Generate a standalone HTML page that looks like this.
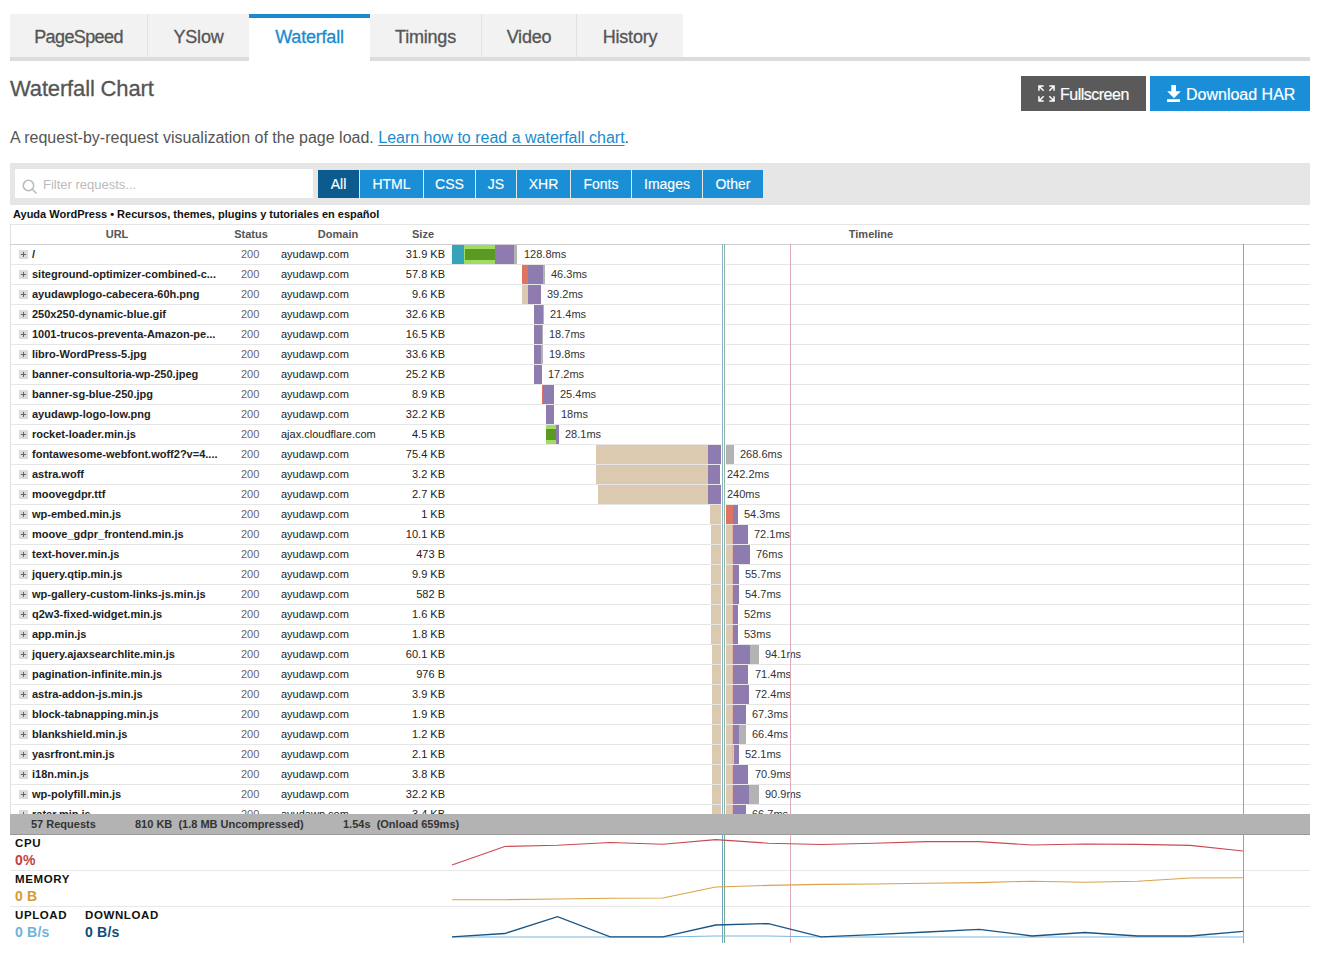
<!DOCTYPE html>
<html><head><meta charset="utf-8">
<style>
*{box-sizing:border-box}
html,body{margin:0;padding:0;background:#fff;width:1325px;height:960px;overflow:hidden}
body{font-family:"Liberation Sans",sans-serif;position:relative}
.a{position:absolute}
.tab{position:absolute;top:14px;height:43px;background:#f2f2f2;color:#555;font-size:18px;text-align:center;line-height:44px;padding-top:1px;letter-spacing:-0.2px;-webkit-text-stroke:0.3px currentColor}
.sep{position:absolute;top:14px;height:43px;width:1px;background:#e2e2e2}
.btn{position:absolute;top:76px;height:35px;color:#fff;font-size:16px;line-height:35px;-webkit-text-stroke:0.2px #fff}
.tb{position:absolute;top:170px;height:28px;background:#1a8fd6;color:#fff;font-size:14px;line-height:28px;text-align:center;-webkit-text-stroke:0.15px #fff}
.row{position:absolute;left:10px;width:1300px;height:20px;border-bottom:1px solid #e6e6e6}
.t{position:absolute;font-size:11px;line-height:20px;white-space:nowrap}
.bar{position:absolute;height:19px}
.lab{position:absolute;font-size:11px;line-height:20px;color:#333;white-space:nowrap}
</style></head><body>

<div class="a" style="left:10px;top:57px;width:1300px;height:4px;background:#dcdcdc"></div>
<div class="tab" style="left:10px;width:137px;letter-spacing:-0.6px;">PageSpeed</div>
<div class="tab" style="left:148px;width:101px;">YSlow</div>
<div class="tab" style="left:370px;width:111px;">Timings</div>
<div class="tab" style="left:482px;width:94px;">Video</div>
<div class="tab" style="left:577px;width:106px;">History</div>
<div class="sep" style="left:147px"></div>
<div class="sep" style="left:481px"></div>
<div class="sep" style="left:576px"></div>
<div class="tab" style="left:249px;width:121px;top:14px;height:47px;background:#fff;color:#1a8bd0;line-height:44px">Waterfall</div>
<div class="a" style="left:249px;top:14px;width:121px;height:4px;background:#1a8bd0"></div>
<div class="a" style="left:10px;top:75px;font-size:22px;line-height:28px;color:#555;letter-spacing:-0.15px;-webkit-text-stroke:0.3px #555">Waterfall Chart</div>
<div class="btn" style="left:1021px;width:125px;background:#5a5a5a">
<svg class="a" style="left:17px;top:9px" width="17" height="17" viewBox="0 0 18 18" fill="none" stroke="#fff" stroke-width="1.6">
<path d="M1 6V1h5M1 1l5 5M12 1h5v5M17 1l-5 5M1 12v5h5M1 17l5-5M17 12v5h-5M17 17l-5-5"/></svg>
<span class="a" style="left:39px;top:1px;letter-spacing:-0.5px">Fullscreen</span></div>
<div class="btn" style="left:1150px;width:160px;background:#1a8fd8">
<svg class="a" style="left:17px;top:9px" width="14" height="17" viewBox="0 0 14 17" fill="#fff">
<path d="M4.3 0H9V6.3H13.8L7 13.3L0.2 6.3H4.3Z"/><rect x="0" y="14.2" width="13" height="2.8"/></svg>
<span class="a" style="left:36px;top:1px">Download HAR</span></div>
<div class="a" style="left:10px;top:128px;font-size:16px;line-height:20px;color:#555;white-space:nowrap">A request-by-request visualization of the page load. <span style="color:#1a8bd0;text-decoration:underline;text-underline-offset:2px">Learn how to read a waterfall chart</span>.</div>
<div class="a" style="left:10px;top:163px;width:1300px;height:42px;background:#e6e6e6"></div>
<div class="a" style="left:15px;top:169px;width:298px;height:29px;background:#fff"></div>
<svg class="a" style="left:22px;top:178.5px" width="16" height="16" viewBox="0 0 16 16" fill="none" stroke="#bbb" stroke-width="1.6"><circle cx="6.5" cy="6.5" r="5.2"/><path d="M10.3 10.3L14.5 14.5"/></svg>
<div class="a" style="left:43px;top:170px;font-size:13px;line-height:29px;color:#bbb">Filter requests...</div>
<div class="tb" style="left:318px;width:41px;background:#0b5b8f">All</div>
<div class="tb" style="left:360px;width:63px;background:#1a8fd6">HTML</div>
<div class="tb" style="left:424px;width:51px;background:#1a8fd6">CSS</div>
<div class="tb" style="left:476px;width:40px;background:#1a8fd6">JS</div>
<div class="tb" style="left:517px;width:53px;background:#1a8fd6">XHR</div>
<div class="tb" style="left:571px;width:60px;background:#1a8fd6">Fonts</div>
<div class="tb" style="left:632px;width:70px;background:#1a8fd6">Images</div>
<div class="tb" style="left:703px;width:60px;background:#1a8fd6">Other</div>
<div class="a" style="left:13px;top:207px;font-size:11px;line-height:14px;font-weight:bold;color:#111;white-space:nowrap">Ayuda WordPress &#8226; Recursos, themes, plugins y tutoriales en espa&ntilde;ol</div>
<div class="a" style="left:10px;top:224px;width:1300px;height:1px;background:#e6e6e6"></div>
<div class="a" style="left:10px;top:224px;width:1px;height:590px;background:#e0e0e0"></div>
<div class="a" style="left:10px;top:244px;width:1300px;height:1px;background:#cfcfcf"></div>
<div class="a" style="left:722px;top:244px;width:1px;height:1px;background:#8fb0cc"></div>
<div class="a" style="left:724px;top:244px;width:1px;height:1px;background:#8cb8a0"></div>
<div class="a" style="left:790px;top:244px;width:1px;height:1px;background:#dcaab8"></div>
<div class="a" style="left:1243px;top:244px;width:1px;height:1px;background:#a89aaa"></div>
<div class="t" style="left:57px;width:120px;top:224px;text-align:center;font-weight:bold;color:#555">URL</div>
<div class="t" style="left:191px;width:120px;top:224px;text-align:center;font-weight:bold;color:#555">Status</div>
<div class="t" style="left:278px;width:120px;top:224px;text-align:center;font-weight:bold;color:#555">Domain</div>
<div class="t" style="left:363px;width:120px;top:224px;text-align:center;font-weight:bold;color:#555">Size</div>
<div class="t" style="left:811px;width:120px;top:224px;text-align:center;font-weight:bold;color:#555">Timeline</div>
<div class="a" style="left:0;top:245px;width:1325px;height:569px;overflow:hidden">
<div class="a" style="left:10px;top:19px;width:1300px;height:1px;background:#e6e6e6"></div>
<div class="a" style="left:19px;top:5px;width:9px;height:9px;background:#dcdcdc"></div>
<div class="a" style="left:21px;top:9px;width:5px;height:1px;background:#666"></div>
<div class="a" style="left:23px;top:7px;width:1px;height:5px;background:#666"></div>
<div class="t" style="left:32px;top:-1px;font-weight:bold;color:#222">/</div>
<div class="t" style="left:241px;top:-1px;color:#666">200</div>
<div class="t" style="left:281px;top:-1px;color:#222">ayudawp.com</div>
<div class="t" style="left:345px;width:100px;text-align:right;top:-1px;color:#222">31.9 KB</div>
<div class="bar" style="left:452px;width:12px;top:0px;background:#35a3b8"></div>
<div class="bar" style="left:464px;width:31px;top:0px;background:#a0dc60"></div>
<div class="bar" style="left:495px;width:19px;top:0px;background:#8e7bb0"></div>
<div class="bar" style="left:514px;width:3px;top:0px;background:#b3b3b3"></div>
<div class="bar" style="left:465px;width:30px;top:4px;height:11px;background:#5a9a22"></div>
<div class="lab" style="left:524px;top:-1px">128.8ms</div>
<div class="a" style="left:10px;top:39px;width:1300px;height:1px;background:#e6e6e6"></div>
<div class="a" style="left:19px;top:25px;width:9px;height:9px;background:#dcdcdc"></div>
<div class="a" style="left:21px;top:29px;width:5px;height:1px;background:#666"></div>
<div class="a" style="left:23px;top:27px;width:1px;height:5px;background:#666"></div>
<div class="t" style="left:32px;top:19px;font-weight:bold;color:#222">siteground-optimizer-combined-c...</div>
<div class="t" style="left:241px;top:19px;color:#666">200</div>
<div class="t" style="left:281px;top:19px;color:#222">ayudawp.com</div>
<div class="t" style="left:345px;width:100px;text-align:right;top:19px;color:#222">57.8 KB</div>
<div class="bar" style="left:522px;width:6px;top:20px;background:#e0735f"></div>
<div class="bar" style="left:528px;width:15px;top:20px;background:#8e7bb0"></div>
<div class="bar" style="left:543px;width:2px;top:20px;background:#b3b3b3"></div>
<div class="lab" style="left:551px;top:19px">46.3ms</div>
<div class="a" style="left:10px;top:59px;width:1300px;height:1px;background:#e6e6e6"></div>
<div class="a" style="left:19px;top:45px;width:9px;height:9px;background:#dcdcdc"></div>
<div class="a" style="left:21px;top:49px;width:5px;height:1px;background:#666"></div>
<div class="a" style="left:23px;top:47px;width:1px;height:5px;background:#666"></div>
<div class="t" style="left:32px;top:39px;font-weight:bold;color:#222">ayudawplogo-cabecera-60h.png</div>
<div class="t" style="left:241px;top:39px;color:#666">200</div>
<div class="t" style="left:281px;top:39px;color:#222">ayudawp.com</div>
<div class="t" style="left:345px;width:100px;text-align:right;top:39px;color:#222">9.6 KB</div>
<div class="bar" style="left:522px;width:6px;top:40px;background:#dccab0"></div>
<div class="bar" style="left:528px;width:13px;top:40px;background:#8e7bb0"></div>
<div class="lab" style="left:547px;top:39px">39.2ms</div>
<div class="a" style="left:10px;top:79px;width:1300px;height:1px;background:#e6e6e6"></div>
<div class="a" style="left:19px;top:65px;width:9px;height:9px;background:#dcdcdc"></div>
<div class="a" style="left:21px;top:69px;width:5px;height:1px;background:#666"></div>
<div class="a" style="left:23px;top:67px;width:1px;height:5px;background:#666"></div>
<div class="t" style="left:32px;top:59px;font-weight:bold;color:#222">250x250-dynamic-blue.gif</div>
<div class="t" style="left:241px;top:59px;color:#666">200</div>
<div class="t" style="left:281px;top:59px;color:#222">ayudawp.com</div>
<div class="t" style="left:345px;width:100px;text-align:right;top:59px;color:#222">32.6 KB</div>
<div class="bar" style="left:534px;width:9px;top:60px;background:#8e7bb0"></div>
<div class="bar" style="left:543px;width:1px;top:60px;background:#b3b3b3"></div>
<div class="lab" style="left:550px;top:59px">21.4ms</div>
<div class="a" style="left:10px;top:99px;width:1300px;height:1px;background:#e6e6e6"></div>
<div class="a" style="left:19px;top:85px;width:9px;height:9px;background:#dcdcdc"></div>
<div class="a" style="left:21px;top:89px;width:5px;height:1px;background:#666"></div>
<div class="a" style="left:23px;top:87px;width:1px;height:5px;background:#666"></div>
<div class="t" style="left:32px;top:79px;font-weight:bold;color:#222">1001-trucos-preventa-Amazon-pe...</div>
<div class="t" style="left:241px;top:79px;color:#666">200</div>
<div class="t" style="left:281px;top:79px;color:#222">ayudawp.com</div>
<div class="t" style="left:345px;width:100px;text-align:right;top:79px;color:#222">16.5 KB</div>
<div class="bar" style="left:534px;width:8px;top:80px;background:#8e7bb0"></div>
<div class="bar" style="left:542px;width:1px;top:80px;background:#b3b3b3"></div>
<div class="lab" style="left:549px;top:79px">18.7ms</div>
<div class="a" style="left:10px;top:119px;width:1300px;height:1px;background:#e6e6e6"></div>
<div class="a" style="left:19px;top:105px;width:9px;height:9px;background:#dcdcdc"></div>
<div class="a" style="left:21px;top:109px;width:5px;height:1px;background:#666"></div>
<div class="a" style="left:23px;top:107px;width:1px;height:5px;background:#666"></div>
<div class="t" style="left:32px;top:99px;font-weight:bold;color:#222">libro-WordPress-5.jpg</div>
<div class="t" style="left:241px;top:99px;color:#666">200</div>
<div class="t" style="left:281px;top:99px;color:#222">ayudawp.com</div>
<div class="t" style="left:345px;width:100px;text-align:right;top:99px;color:#222">33.6 KB</div>
<div class="bar" style="left:534px;width:7px;top:100px;background:#8e7bb0"></div>
<div class="bar" style="left:541px;width:2px;top:100px;background:#b3b3b3"></div>
<div class="lab" style="left:549px;top:99px">19.8ms</div>
<div class="a" style="left:10px;top:139px;width:1300px;height:1px;background:#e6e6e6"></div>
<div class="a" style="left:19px;top:125px;width:9px;height:9px;background:#dcdcdc"></div>
<div class="a" style="left:21px;top:129px;width:5px;height:1px;background:#666"></div>
<div class="a" style="left:23px;top:127px;width:1px;height:5px;background:#666"></div>
<div class="t" style="left:32px;top:119px;font-weight:bold;color:#222">banner-consultoria-wp-250.jpeg</div>
<div class="t" style="left:241px;top:119px;color:#666">200</div>
<div class="t" style="left:281px;top:119px;color:#222">ayudawp.com</div>
<div class="t" style="left:345px;width:100px;text-align:right;top:119px;color:#222">25.2 KB</div>
<div class="bar" style="left:534px;width:8px;top:120px;background:#8e7bb0"></div>
<div class="lab" style="left:548px;top:119px">17.2ms</div>
<div class="a" style="left:10px;top:159px;width:1300px;height:1px;background:#e6e6e6"></div>
<div class="a" style="left:19px;top:145px;width:9px;height:9px;background:#dcdcdc"></div>
<div class="a" style="left:21px;top:149px;width:5px;height:1px;background:#666"></div>
<div class="a" style="left:23px;top:147px;width:1px;height:5px;background:#666"></div>
<div class="t" style="left:32px;top:139px;font-weight:bold;color:#222">banner-sg-blue-250.jpg</div>
<div class="t" style="left:241px;top:139px;color:#666">200</div>
<div class="t" style="left:281px;top:139px;color:#222">ayudawp.com</div>
<div class="t" style="left:345px;width:100px;text-align:right;top:139px;color:#222">8.9 KB</div>
<div class="bar" style="left:542px;width:1px;top:140px;background:#e0735f"></div>
<div class="bar" style="left:543px;width:11px;top:140px;background:#8e7bb0"></div>
<div class="lab" style="left:560px;top:139px">25.4ms</div>
<div class="a" style="left:10px;top:179px;width:1300px;height:1px;background:#e6e6e6"></div>
<div class="a" style="left:19px;top:165px;width:9px;height:9px;background:#dcdcdc"></div>
<div class="a" style="left:21px;top:169px;width:5px;height:1px;background:#666"></div>
<div class="a" style="left:23px;top:167px;width:1px;height:5px;background:#666"></div>
<div class="t" style="left:32px;top:159px;font-weight:bold;color:#222">ayudawp-logo-low.png</div>
<div class="t" style="left:241px;top:159px;color:#666">200</div>
<div class="t" style="left:281px;top:159px;color:#222">ayudawp.com</div>
<div class="t" style="left:345px;width:100px;text-align:right;top:159px;color:#222">32.2 KB</div>
<div class="bar" style="left:546px;width:8px;top:160px;background:#8e7bb0"></div>
<div class="lab" style="left:561px;top:159px">18ms</div>
<div class="a" style="left:10px;top:199px;width:1300px;height:1px;background:#e6e6e6"></div>
<div class="a" style="left:19px;top:185px;width:9px;height:9px;background:#dcdcdc"></div>
<div class="a" style="left:21px;top:189px;width:5px;height:1px;background:#666"></div>
<div class="a" style="left:23px;top:187px;width:1px;height:5px;background:#666"></div>
<div class="t" style="left:32px;top:179px;font-weight:bold;color:#222">rocket-loader.min.js</div>
<div class="t" style="left:241px;top:179px;color:#666">200</div>
<div class="t" style="left:281px;top:179px;color:#222">ajax.cloudflare.com</div>
<div class="t" style="left:345px;width:100px;text-align:right;top:179px;color:#222">4.5 KB</div>
<div class="bar" style="left:546px;width:10px;top:180px;background:#a0dc60"></div>
<div class="bar" style="left:556px;width:3px;top:180px;background:#8e7bb0"></div>
<div class="bar" style="left:546px;width:10px;top:184px;height:11px;background:#5a9a22"></div>
<div class="lab" style="left:565px;top:179px">28.1ms</div>
<div class="a" style="left:10px;top:219px;width:1300px;height:1px;background:#e6e6e6"></div>
<div class="a" style="left:19px;top:205px;width:9px;height:9px;background:#dcdcdc"></div>
<div class="a" style="left:21px;top:209px;width:5px;height:1px;background:#666"></div>
<div class="a" style="left:23px;top:207px;width:1px;height:5px;background:#666"></div>
<div class="t" style="left:32px;top:199px;font-weight:bold;color:#222">fontawesome-webfont.woff2?v=4....</div>
<div class="t" style="left:241px;top:199px;color:#666">200</div>
<div class="t" style="left:281px;top:199px;color:#222">ayudawp.com</div>
<div class="t" style="left:345px;width:100px;text-align:right;top:199px;color:#222">75.4 KB</div>
<div class="bar" style="left:596px;width:112px;top:200px;background:#dccab0"></div>
<div class="bar" style="left:708px;width:13px;top:200px;background:#8e7bb0"></div>
<div class="bar" style="left:726px;width:8px;top:200px;background:#b3b3b3"></div>
<div class="lab" style="left:740px;top:199px">268.6ms</div>
<div class="a" style="left:10px;top:239px;width:1300px;height:1px;background:#e6e6e6"></div>
<div class="a" style="left:19px;top:225px;width:9px;height:9px;background:#dcdcdc"></div>
<div class="a" style="left:21px;top:229px;width:5px;height:1px;background:#666"></div>
<div class="a" style="left:23px;top:227px;width:1px;height:5px;background:#666"></div>
<div class="t" style="left:32px;top:219px;font-weight:bold;color:#222">astra.woff</div>
<div class="t" style="left:241px;top:219px;color:#666">200</div>
<div class="t" style="left:281px;top:219px;color:#222">ayudawp.com</div>
<div class="t" style="left:345px;width:100px;text-align:right;top:219px;color:#222">3.2 KB</div>
<div class="bar" style="left:596px;width:112px;top:220px;background:#dccab0"></div>
<div class="bar" style="left:708px;width:12px;top:220px;background:#8e7bb0"></div>
<div class="lab" style="left:727px;top:219px">242.2ms</div>
<div class="a" style="left:10px;top:259px;width:1300px;height:1px;background:#e6e6e6"></div>
<div class="a" style="left:19px;top:245px;width:9px;height:9px;background:#dcdcdc"></div>
<div class="a" style="left:21px;top:249px;width:5px;height:1px;background:#666"></div>
<div class="a" style="left:23px;top:247px;width:1px;height:5px;background:#666"></div>
<div class="t" style="left:32px;top:239px;font-weight:bold;color:#222">moovegdpr.ttf</div>
<div class="t" style="left:241px;top:239px;color:#666">200</div>
<div class="t" style="left:281px;top:239px;color:#222">ayudawp.com</div>
<div class="t" style="left:345px;width:100px;text-align:right;top:239px;color:#222">2.7 KB</div>
<div class="bar" style="left:598px;width:110px;top:240px;background:#dccab0"></div>
<div class="bar" style="left:708px;width:13px;top:240px;background:#8e7bb0"></div>
<div class="lab" style="left:727px;top:239px">240ms</div>
<div class="a" style="left:10px;top:279px;width:1300px;height:1px;background:#e6e6e6"></div>
<div class="a" style="left:19px;top:265px;width:9px;height:9px;background:#dcdcdc"></div>
<div class="a" style="left:21px;top:269px;width:5px;height:1px;background:#666"></div>
<div class="a" style="left:23px;top:267px;width:1px;height:5px;background:#666"></div>
<div class="t" style="left:32px;top:259px;font-weight:bold;color:#222">wp-embed.min.js</div>
<div class="t" style="left:241px;top:259px;color:#666">200</div>
<div class="t" style="left:281px;top:259px;color:#222">ayudawp.com</div>
<div class="t" style="left:345px;width:100px;text-align:right;top:259px;color:#222">1 KB</div>
<div class="bar" style="left:710px;width:16px;top:260px;background:#dccab0"></div>
<div class="bar" style="left:726px;width:7px;top:260px;background:#e0735f"></div>
<div class="bar" style="left:733px;width:5px;top:260px;background:#8e7bb0"></div>
<div class="lab" style="left:744px;top:259px">54.3ms</div>
<div class="a" style="left:10px;top:299px;width:1300px;height:1px;background:#e6e6e6"></div>
<div class="a" style="left:19px;top:285px;width:9px;height:9px;background:#dcdcdc"></div>
<div class="a" style="left:21px;top:289px;width:5px;height:1px;background:#666"></div>
<div class="a" style="left:23px;top:287px;width:1px;height:5px;background:#666"></div>
<div class="t" style="left:32px;top:279px;font-weight:bold;color:#222">moove_gdpr_frontend.min.js</div>
<div class="t" style="left:241px;top:279px;color:#666">200</div>
<div class="t" style="left:281px;top:279px;color:#222">ayudawp.com</div>
<div class="t" style="left:345px;width:100px;text-align:right;top:279px;color:#222">10.1 KB</div>
<div class="bar" style="left:711px;width:22px;top:280px;background:#dccab0"></div>
<div class="bar" style="left:733px;width:15px;top:280px;background:#8e7bb0"></div>
<div class="bar" style="left:732px;width:1px;top:280px;background:#eab0a0"></div>
<div class="lab" style="left:754px;top:279px">72.1ms</div>
<div class="a" style="left:10px;top:319px;width:1300px;height:1px;background:#e6e6e6"></div>
<div class="a" style="left:19px;top:305px;width:9px;height:9px;background:#dcdcdc"></div>
<div class="a" style="left:21px;top:309px;width:5px;height:1px;background:#666"></div>
<div class="a" style="left:23px;top:307px;width:1px;height:5px;background:#666"></div>
<div class="t" style="left:32px;top:299px;font-weight:bold;color:#222">text-hover.min.js</div>
<div class="t" style="left:241px;top:299px;color:#666">200</div>
<div class="t" style="left:281px;top:299px;color:#222">ayudawp.com</div>
<div class="t" style="left:345px;width:100px;text-align:right;top:299px;color:#222">473 B</div>
<div class="bar" style="left:711px;width:22px;top:300px;background:#dccab0"></div>
<div class="bar" style="left:733px;width:17px;top:300px;background:#8e7bb0"></div>
<div class="bar" style="left:732px;width:1px;top:300px;background:#eab0a0"></div>
<div class="lab" style="left:756px;top:299px">76ms</div>
<div class="a" style="left:10px;top:339px;width:1300px;height:1px;background:#e6e6e6"></div>
<div class="a" style="left:19px;top:325px;width:9px;height:9px;background:#dcdcdc"></div>
<div class="a" style="left:21px;top:329px;width:5px;height:1px;background:#666"></div>
<div class="a" style="left:23px;top:327px;width:1px;height:5px;background:#666"></div>
<div class="t" style="left:32px;top:319px;font-weight:bold;color:#222">jquery.qtip.min.js</div>
<div class="t" style="left:241px;top:319px;color:#666">200</div>
<div class="t" style="left:281px;top:319px;color:#222">ayudawp.com</div>
<div class="t" style="left:345px;width:100px;text-align:right;top:319px;color:#222">9.9 KB</div>
<div class="bar" style="left:711px;width:22px;top:320px;background:#dccab0"></div>
<div class="bar" style="left:733px;width:6px;top:320px;background:#8e7bb0"></div>
<div class="bar" style="left:732px;width:1px;top:320px;background:#eab0a0"></div>
<div class="lab" style="left:745px;top:319px">55.7ms</div>
<div class="a" style="left:10px;top:359px;width:1300px;height:1px;background:#e6e6e6"></div>
<div class="a" style="left:19px;top:345px;width:9px;height:9px;background:#dcdcdc"></div>
<div class="a" style="left:21px;top:349px;width:5px;height:1px;background:#666"></div>
<div class="a" style="left:23px;top:347px;width:1px;height:5px;background:#666"></div>
<div class="t" style="left:32px;top:339px;font-weight:bold;color:#222">wp-gallery-custom-links-js.min.js</div>
<div class="t" style="left:241px;top:339px;color:#666">200</div>
<div class="t" style="left:281px;top:339px;color:#222">ayudawp.com</div>
<div class="t" style="left:345px;width:100px;text-align:right;top:339px;color:#222">582 B</div>
<div class="bar" style="left:711px;width:22px;top:340px;background:#dccab0"></div>
<div class="bar" style="left:733px;width:6px;top:340px;background:#8e7bb0"></div>
<div class="bar" style="left:732px;width:1px;top:340px;background:#eab0a0"></div>
<div class="lab" style="left:745px;top:339px">54.7ms</div>
<div class="a" style="left:10px;top:379px;width:1300px;height:1px;background:#e6e6e6"></div>
<div class="a" style="left:19px;top:365px;width:9px;height:9px;background:#dcdcdc"></div>
<div class="a" style="left:21px;top:369px;width:5px;height:1px;background:#666"></div>
<div class="a" style="left:23px;top:367px;width:1px;height:5px;background:#666"></div>
<div class="t" style="left:32px;top:359px;font-weight:bold;color:#222">q2w3-fixed-widget.min.js</div>
<div class="t" style="left:241px;top:359px;color:#666">200</div>
<div class="t" style="left:281px;top:359px;color:#222">ayudawp.com</div>
<div class="t" style="left:345px;width:100px;text-align:right;top:359px;color:#222">1.6 KB</div>
<div class="bar" style="left:711px;width:22px;top:360px;background:#dccab0"></div>
<div class="bar" style="left:733px;width:5px;top:360px;background:#8e7bb0"></div>
<div class="bar" style="left:732px;width:1px;top:360px;background:#eab0a0"></div>
<div class="lab" style="left:744px;top:359px">52ms</div>
<div class="a" style="left:10px;top:399px;width:1300px;height:1px;background:#e6e6e6"></div>
<div class="a" style="left:19px;top:385px;width:9px;height:9px;background:#dcdcdc"></div>
<div class="a" style="left:21px;top:389px;width:5px;height:1px;background:#666"></div>
<div class="a" style="left:23px;top:387px;width:1px;height:5px;background:#666"></div>
<div class="t" style="left:32px;top:379px;font-weight:bold;color:#222">app.min.js</div>
<div class="t" style="left:241px;top:379px;color:#666">200</div>
<div class="t" style="left:281px;top:379px;color:#222">ayudawp.com</div>
<div class="t" style="left:345px;width:100px;text-align:right;top:379px;color:#222">1.8 KB</div>
<div class="bar" style="left:711px;width:22px;top:380px;background:#dccab0"></div>
<div class="bar" style="left:733px;width:5px;top:380px;background:#8e7bb0"></div>
<div class="bar" style="left:732px;width:1px;top:380px;background:#eab0a0"></div>
<div class="lab" style="left:744px;top:379px">53ms</div>
<div class="a" style="left:10px;top:419px;width:1300px;height:1px;background:#e6e6e6"></div>
<div class="a" style="left:19px;top:405px;width:9px;height:9px;background:#dcdcdc"></div>
<div class="a" style="left:21px;top:409px;width:5px;height:1px;background:#666"></div>
<div class="a" style="left:23px;top:407px;width:1px;height:5px;background:#666"></div>
<div class="t" style="left:32px;top:399px;font-weight:bold;color:#222">jquery.ajaxsearchlite.min.js</div>
<div class="t" style="left:241px;top:399px;color:#666">200</div>
<div class="t" style="left:281px;top:399px;color:#222">ayudawp.com</div>
<div class="t" style="left:345px;width:100px;text-align:right;top:399px;color:#222">60.1 KB</div>
<div class="bar" style="left:712px;width:21px;top:400px;background:#dccab0"></div>
<div class="bar" style="left:733px;width:17px;top:400px;background:#8e7bb0"></div>
<div class="bar" style="left:750px;width:9px;top:400px;background:#b3b3b3"></div>
<div class="bar" style="left:732px;width:1px;top:400px;background:#eab0a0"></div>
<div class="lab" style="left:765px;top:399px">94.1ms</div>
<div class="a" style="left:10px;top:439px;width:1300px;height:1px;background:#e6e6e6"></div>
<div class="a" style="left:19px;top:425px;width:9px;height:9px;background:#dcdcdc"></div>
<div class="a" style="left:21px;top:429px;width:5px;height:1px;background:#666"></div>
<div class="a" style="left:23px;top:427px;width:1px;height:5px;background:#666"></div>
<div class="t" style="left:32px;top:419px;font-weight:bold;color:#222">pagination-infinite.min.js</div>
<div class="t" style="left:241px;top:419px;color:#666">200</div>
<div class="t" style="left:281px;top:419px;color:#222">ayudawp.com</div>
<div class="t" style="left:345px;width:100px;text-align:right;top:419px;color:#222">976 B</div>
<div class="bar" style="left:712px;width:21px;top:420px;background:#dccab0"></div>
<div class="bar" style="left:733px;width:15px;top:420px;background:#8e7bb0"></div>
<div class="bar" style="left:732px;width:1px;top:420px;background:#eab0a0"></div>
<div class="lab" style="left:755px;top:419px">71.4ms</div>
<div class="a" style="left:10px;top:459px;width:1300px;height:1px;background:#e6e6e6"></div>
<div class="a" style="left:19px;top:445px;width:9px;height:9px;background:#dcdcdc"></div>
<div class="a" style="left:21px;top:449px;width:5px;height:1px;background:#666"></div>
<div class="a" style="left:23px;top:447px;width:1px;height:5px;background:#666"></div>
<div class="t" style="left:32px;top:439px;font-weight:bold;color:#222">astra-addon-js.min.js</div>
<div class="t" style="left:241px;top:439px;color:#666">200</div>
<div class="t" style="left:281px;top:439px;color:#222">ayudawp.com</div>
<div class="t" style="left:345px;width:100px;text-align:right;top:439px;color:#222">3.9 KB</div>
<div class="bar" style="left:712px;width:21px;top:440px;background:#dccab0"></div>
<div class="bar" style="left:733px;width:16px;top:440px;background:#8e7bb0"></div>
<div class="bar" style="left:732px;width:1px;top:440px;background:#eab0a0"></div>
<div class="lab" style="left:755px;top:439px">72.4ms</div>
<div class="a" style="left:10px;top:479px;width:1300px;height:1px;background:#e6e6e6"></div>
<div class="a" style="left:19px;top:465px;width:9px;height:9px;background:#dcdcdc"></div>
<div class="a" style="left:21px;top:469px;width:5px;height:1px;background:#666"></div>
<div class="a" style="left:23px;top:467px;width:1px;height:5px;background:#666"></div>
<div class="t" style="left:32px;top:459px;font-weight:bold;color:#222">block-tabnapping.min.js</div>
<div class="t" style="left:241px;top:459px;color:#666">200</div>
<div class="t" style="left:281px;top:459px;color:#222">ayudawp.com</div>
<div class="t" style="left:345px;width:100px;text-align:right;top:459px;color:#222">1.9 KB</div>
<div class="bar" style="left:712px;width:21px;top:460px;background:#dccab0"></div>
<div class="bar" style="left:733px;width:13px;top:460px;background:#8e7bb0"></div>
<div class="bar" style="left:732px;width:1px;top:460px;background:#eab0a0"></div>
<div class="lab" style="left:752px;top:459px">67.3ms</div>
<div class="a" style="left:10px;top:499px;width:1300px;height:1px;background:#e6e6e6"></div>
<div class="a" style="left:19px;top:485px;width:9px;height:9px;background:#dcdcdc"></div>
<div class="a" style="left:21px;top:489px;width:5px;height:1px;background:#666"></div>
<div class="a" style="left:23px;top:487px;width:1px;height:5px;background:#666"></div>
<div class="t" style="left:32px;top:479px;font-weight:bold;color:#222">blankshield.min.js</div>
<div class="t" style="left:241px;top:479px;color:#666">200</div>
<div class="t" style="left:281px;top:479px;color:#222">ayudawp.com</div>
<div class="t" style="left:345px;width:100px;text-align:right;top:479px;color:#222">1.2 KB</div>
<div class="bar" style="left:712px;width:21px;top:480px;background:#dccab0"></div>
<div class="bar" style="left:733px;width:6px;top:480px;background:#8e7bb0"></div>
<div class="bar" style="left:739px;width:7px;top:480px;background:#b3b3b3"></div>
<div class="bar" style="left:732px;width:1px;top:480px;background:#eab0a0"></div>
<div class="lab" style="left:752px;top:479px">66.4ms</div>
<div class="a" style="left:10px;top:519px;width:1300px;height:1px;background:#e6e6e6"></div>
<div class="a" style="left:19px;top:505px;width:9px;height:9px;background:#dcdcdc"></div>
<div class="a" style="left:21px;top:509px;width:5px;height:1px;background:#666"></div>
<div class="a" style="left:23px;top:507px;width:1px;height:5px;background:#666"></div>
<div class="t" style="left:32px;top:499px;font-weight:bold;color:#222">yasrfront.min.js</div>
<div class="t" style="left:241px;top:499px;color:#666">200</div>
<div class="t" style="left:281px;top:499px;color:#222">ayudawp.com</div>
<div class="t" style="left:345px;width:100px;text-align:right;top:499px;color:#222">2.1 KB</div>
<div class="bar" style="left:712px;width:22px;top:500px;background:#dccab0"></div>
<div class="bar" style="left:734px;width:5px;top:500px;background:#8e7bb0"></div>
<div class="bar" style="left:732px;width:1px;top:500px;background:#eab0a0"></div>
<div class="lab" style="left:745px;top:499px">52.1ms</div>
<div class="a" style="left:10px;top:539px;width:1300px;height:1px;background:#e6e6e6"></div>
<div class="a" style="left:19px;top:525px;width:9px;height:9px;background:#dcdcdc"></div>
<div class="a" style="left:21px;top:529px;width:5px;height:1px;background:#666"></div>
<div class="a" style="left:23px;top:527px;width:1px;height:5px;background:#666"></div>
<div class="t" style="left:32px;top:519px;font-weight:bold;color:#222">i18n.min.js</div>
<div class="t" style="left:241px;top:519px;color:#666">200</div>
<div class="t" style="left:281px;top:519px;color:#222">ayudawp.com</div>
<div class="t" style="left:345px;width:100px;text-align:right;top:519px;color:#222">3.8 KB</div>
<div class="bar" style="left:712px;width:21px;top:520px;background:#dccab0"></div>
<div class="bar" style="left:733px;width:15px;top:520px;background:#8e7bb0"></div>
<div class="bar" style="left:732px;width:1px;top:520px;background:#eab0a0"></div>
<div class="lab" style="left:755px;top:519px">70.9ms</div>
<div class="a" style="left:10px;top:559px;width:1300px;height:1px;background:#e6e6e6"></div>
<div class="a" style="left:19px;top:545px;width:9px;height:9px;background:#dcdcdc"></div>
<div class="a" style="left:21px;top:549px;width:5px;height:1px;background:#666"></div>
<div class="a" style="left:23px;top:547px;width:1px;height:5px;background:#666"></div>
<div class="t" style="left:32px;top:539px;font-weight:bold;color:#222">wp-polyfill.min.js</div>
<div class="t" style="left:241px;top:539px;color:#666">200</div>
<div class="t" style="left:281px;top:539px;color:#222">ayudawp.com</div>
<div class="t" style="left:345px;width:100px;text-align:right;top:539px;color:#222">32.2 KB</div>
<div class="bar" style="left:712px;width:21px;top:540px;background:#dccab0"></div>
<div class="bar" style="left:733px;width:16px;top:540px;background:#8e7bb0"></div>
<div class="bar" style="left:749px;width:10px;top:540px;background:#b3b3b3"></div>
<div class="bar" style="left:732px;width:1px;top:540px;background:#eab0a0"></div>
<div class="lab" style="left:765px;top:539px">90.9ms</div>
<div class="a" style="left:10px;top:579px;width:1300px;height:1px;background:#e6e6e6"></div>
<div class="a" style="left:19px;top:565px;width:9px;height:9px;background:#dcdcdc"></div>
<div class="a" style="left:21px;top:569px;width:5px;height:1px;background:#666"></div>
<div class="a" style="left:23px;top:567px;width:1px;height:5px;background:#666"></div>
<div class="t" style="left:32px;top:559px;font-weight:bold;color:#222">rater.min.js</div>
<div class="t" style="left:241px;top:559px;color:#666">200</div>
<div class="t" style="left:281px;top:559px;color:#222">ayudawp.com</div>
<div class="t" style="left:345px;width:100px;text-align:right;top:559px;color:#222">3.4 KB</div>
<div class="bar" style="left:712px;width:21px;top:560px;background:#dccab0"></div>
<div class="bar" style="left:733px;width:13px;top:560px;background:#8e7bb0"></div>
<div class="bar" style="left:732px;width:1px;top:560px;background:#eab0a0"></div>
<div class="lab" style="left:752px;top:559px">66.7ms</div>
<div class="a" style="left:721px;top:0;width:5px;height:569px;background:#fff"></div>
<div class="a" style="left:722px;top:0;width:1px;height:569px;background:#8fb0cc"></div>
<div class="a" style="left:724px;top:0;width:1px;height:569px;background:#8cb8a0"></div>
<div class="a" style="left:790px;top:0;width:1px;height:569px;background:#dcaab8"></div>
<div class="a" style="left:1243px;top:0;width:1px;height:569px;background:#a89aaa"></div>
</div>
<div class="a" style="left:10px;top:814px;width:1300px;height:21px;background:#b3b3b3;border-bottom:1px solid #999"></div>
<div class="t" style="left:31px;top:814px;font-weight:bold;color:#333">57 Requests</div>
<div class="t" style="left:135px;top:814px;font-weight:bold;color:#333;white-space:pre">810 KB  (1.8 MB Uncompressed)</div>
<div class="t" style="left:343px;top:814px;font-weight:bold;color:#333;white-space:pre">1.54s  (Onload 659ms)</div>
<div class="a" style="left:15px;top:837px;font-size:11.5px;line-height:12px;font-weight:bold;color:#111;letter-spacing:0.6px">CPU</div>
<div class="a" style="left:15px;top:853px;font-size:14px;line-height:14px;font-weight:bold;letter-spacing:0.2px;color:#c43f42">0%</div>
<div class="a" style="left:10px;top:870px;width:1300px;height:1px;background:#e8e8e8"></div>
<div class="a" style="left:15px;top:873px;font-size:11.5px;line-height:12px;font-weight:bold;color:#111;letter-spacing:0.6px">MEMORY</div>
<div class="a" style="left:15px;top:889px;font-size:14px;line-height:14px;font-weight:bold;letter-spacing:0.2px;color:#d79a35">0 B</div>
<div class="a" style="left:10px;top:906px;width:1300px;height:1px;background:#e8e8e8"></div>
<div class="a" style="left:15px;top:909px;font-size:11.5px;line-height:12px;font-weight:bold;color:#111;letter-spacing:0.6px">UPLOAD</div>
<div class="a" style="left:85px;top:909px;font-size:11.5px;line-height:12px;font-weight:bold;color:#111;letter-spacing:0.6px">DOWNLOAD</div>
<div class="a" style="left:15px;top:925px;font-size:14px;line-height:14px;font-weight:bold;letter-spacing:0.2px;color:#6db3de">0 B/s</div>
<div class="a" style="left:85px;top:925px;font-size:14px;line-height:14px;font-weight:bold;letter-spacing:0.2px;color:#0b4d7a">0 B/s</div>
<svg class="a" style="left:0;top:0" width="1325" height="960" viewBox="0 0 1325 960">
<line x1="722.5" y1="834" x2="722.5" y2="943" stroke="#72a2c4" stroke-width="1"/>
<line x1="724.5" y1="834" x2="724.5" y2="943" stroke="#74aa8e" stroke-width="1"/>
<line x1="790.5" y1="834" x2="790.5" y2="943" stroke="#dcaab8" stroke-width="1"/>
<line x1="1243.5" y1="834" x2="1243.5" y2="943" stroke="#a89aaa" stroke-width="1"/>
<polyline points="452.0,865.0 504.7,846.5 557.5,845.3 610.2,842.5 662.9,844.2 715.7,839.6 768.4,843.2 821.1,844.5 873.9,843.3 926.6,841.6 979.3,841.6 1032.1,845.0 1084.8,844.0 1137.5,844.4 1190.3,845.4 1243.0,851.0" fill="none" stroke="#c94a50" stroke-width="1.1"/>
<polyline points="452.0,899.7 504.7,899.7 557.5,899.0 610.2,898.3 662.9,898.0 715.7,887.0 768.4,885.4 821.1,884.4 873.9,884.0 926.6,883.3 979.3,882.6 1032.1,881.2 1084.8,882.3 1137.5,881.2 1190.3,878.0 1243.0,877.7" fill="none" stroke="#dba24a" stroke-width="1.1"/>
<polyline points="452.0,937.0 504.7,937.0 557.5,937.0 610.2,937.0 662.9,937.0 715.7,936.0 768.4,936.0 821.1,937.0 873.9,937.0 926.6,937.0 979.3,937.0 1032.1,937.0 1084.8,937.0 1137.5,937.0 1190.3,937.0 1243.0,937.0" fill="none" stroke="#7ab8e0" stroke-width="1.1"/>
<polyline points="452.0,936.9 504.7,933.5 557.5,916.6 610.2,936.9 662.9,936.9 715.7,925.0 768.4,923.6 821.1,936.9 873.9,934.6 926.6,932.0 979.3,929.3 1032.1,936.0 1084.8,932.5 1137.5,936.0 1190.3,936.0 1243.0,931.4" fill="none" stroke="#1a5585" stroke-width="1.3"/>
</svg>
</body></html>
